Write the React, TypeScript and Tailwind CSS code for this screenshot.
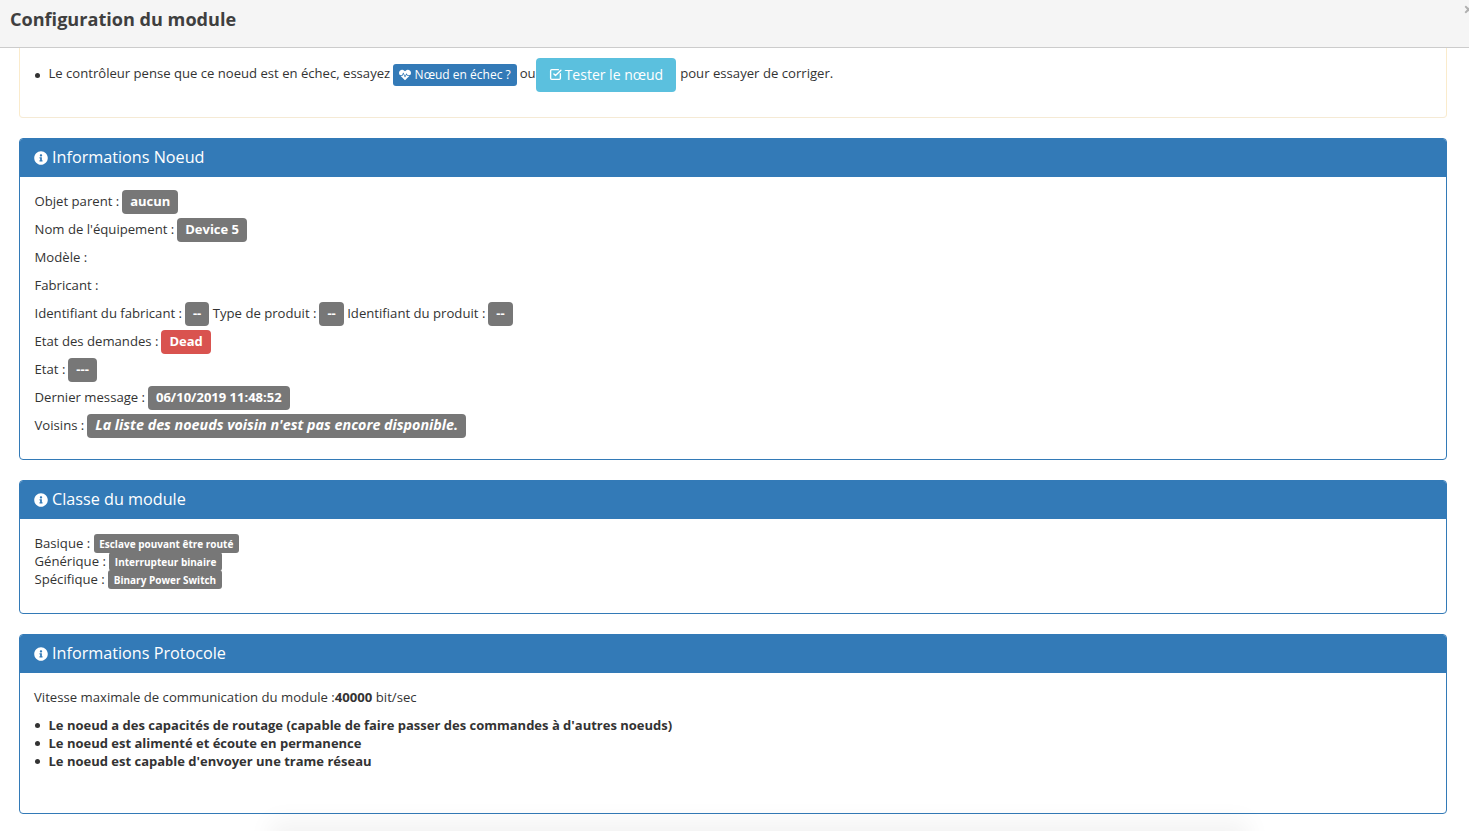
import React from 'react';
import { FaInfoCircle, FaHeartbeat, FaTimes } from 'react-icons/fa';
import { SquareCheckBig } from 'lucide-react';

const Badge = ({ children, red, italic }: { children: React.ReactNode; red?: boolean; italic?: boolean }) => (
  <span
    className={`-ml-[0.5px] inline-block h-[24px] rounded-[4px] px-[8px] align-baseline font-bold leading-[22px] text-white ${red ? 'bg-[#d9534f]' : 'bg-[#777777]'} ${italic ? 'text-[14.3px] italic' : 'text-[13px]'}`}
  >
    {children}
  </span>
);

const SmallBadge = ({ children }: { children: React.ReactNode }) => (
  <span className="inline-block h-[19px] rounded-[3px] bg-[#777777] px-[5.5px] align-baseline text-[10px] font-bold leading-[20px] text-white">
    {children}
  </span>
);

const Row = ({ children }: { children: React.ReactNode }) => (
  <div className="h-[28px] whitespace-nowrap leading-[28px]">{children}</div>
);

const Bullet = () => <span className="ml-[1px] mr-[8.5px] h-[5px] w-[5px] shrink-0 rounded-full bg-[#333333]" />;

const Panel = ({ title, height, children }: { title: string; height: string; children: React.ReactNode }) => (
  <section className={`ml-[19px] mr-[22px] overflow-hidden rounded-[4px] border border-[#337ab7] bg-white ${height}`}>
    <h3 className="flex h-[38px] items-center gap-[4px] bg-[#337ab7] px-[14px] pb-[2px] text-[16.2px] font-normal text-white">
      <FaInfoCircle className="mt-[1px] h-[14px] w-[14px]" />
      {title}
    </h3>
    {children}
  </section>
);

export default function App() {
  return (
    <div className="relative h-[831px] w-full overflow-hidden bg-white font-['Open_Sans',sans-serif] text-[13.15px] text-[#333333]">
      <header className="flex h-[48px] items-start border-b border-[#cccccc] bg-[#f5f5f5] pl-[10px] pt-[6px]">
        <h2 className="text-[18.1px] font-bold leading-[27px] text-[#3f3f3f]">Configuration du module</h2>
      </header>
      <FaTimes className="absolute right-[-5px] top-[4px] h-[11px] w-[11px] text-[#b0b0b0]" />

      <div className="ml-[19px] mr-[22px] h-[70px] rounded-b-[4px] border-x border-b border-x-[#faebcc] border-b-[#f5ead5] bg-white">
        <ul className="ml-[14px] pt-[10px]">
          <li className="flex h-[34px] items-center whitespace-pre">
            <Bullet />
            <span className="mb-[2px] text-[13.1px]">Le contrôleur pense que ce noeud est en échec, essayez </span>
            <span className="-ml-[1px] mr-[3px] flex h-[22px] items-center gap-[4px] rounded-[3px] bg-[#337ab7] px-[6px] text-[12px] text-white">
              <FaHeartbeat className="h-[12px] w-[12px]" />
              Nœud en échec ?
            </span>
            <span className="mb-[2px]">ou</span>
            <span className="mr-[4px] flex h-[34px] items-center gap-[3px] rounded-[4px] bg-[#5bc0de] px-[13px] pb-[2px] text-[14px] text-white">
              <SquareCheckBig className="h-[13px] w-[13px]" strokeWidth={2.5} />
              Tester le nœud
            </span>
            <span className="mb-[2px]">pour essayer de corriger.</span>
          </li>
        </ul>
      </div>

      <div className="mt-[20px] flex flex-col gap-[20px]">
        <Panel title="Informations Noeud" height="h-[322px]">
          <div className="pl-[14.5px] pr-[14px] pt-[10px]">
            <Row>Objet parent : <Badge>aucun</Badge></Row>
            <Row>Nom de l'équipement : <Badge>Device 5</Badge></Row>
            <Row>Modèle :</Row>
            <Row>Fabricant :</Row>
            <Row>
              Identifiant du fabricant : <Badge>--</Badge> Type de produit : <Badge>--</Badge> Identifiant du produit : <Badge>--</Badge>
            </Row>
            <Row>Etat des demandes : <Badge red>Dead</Badge></Row>
            <Row>Etat : <Badge>---</Badge></Row>
            <Row>Dernier message : <Badge>06/10/2019 11:48:52</Badge></Row>
            <Row>Voisins : <Badge italic>La liste des noeuds voisin n'est pas encore disponible.</Badge></Row>
          </div>
        </Panel>

        <Panel title="Classe du module" height="h-[134px]">
          <div className="pl-[14.5px] pr-[14px] pt-[15px] leading-[18px]">
            <div className="h-[18px]">Basique : <SmallBadge>Esclave pouvant être routé</SmallBadge></div>
            <div className="h-[18px]">Générique : <SmallBadge>Interrupteur binaire</SmallBadge></div>
            <div className="h-[18px]">Spécifique : <SmallBadge>Binary Power Switch</SmallBadge></div>
          </div>
        </Panel>

        <Panel title="Informations Protocole" height="h-[180px]">
          <div className="px-[14px] pt-[14px] leading-[20px]">
            <p>Vitesse maximale de communication du module :<b>40000</b> bit/sec</p>
            <ul className="mt-[9px] text-[13px] font-bold leading-[18px]">
              <li className="flex items-center"><Bullet />Le noeud a des capacités de routage (capable de faire passer des commandes à d'autres noeuds)</li>
              <li className="flex items-center"><Bullet />Le noeud est alimenté et écoute en permanence</li>
              <li className="flex items-center"><Bullet />Le noeud est capable d'envoyer une trame réseau</li>
            </ul>
          </div>
        </Panel>
      </div>

      <div className="absolute bottom-[-16px] left-[280px] right-[230px] h-[16px] shadow-[0_0_24px_10px_rgba(0,0,0,0.05)]" />
    </div>
  );
}
